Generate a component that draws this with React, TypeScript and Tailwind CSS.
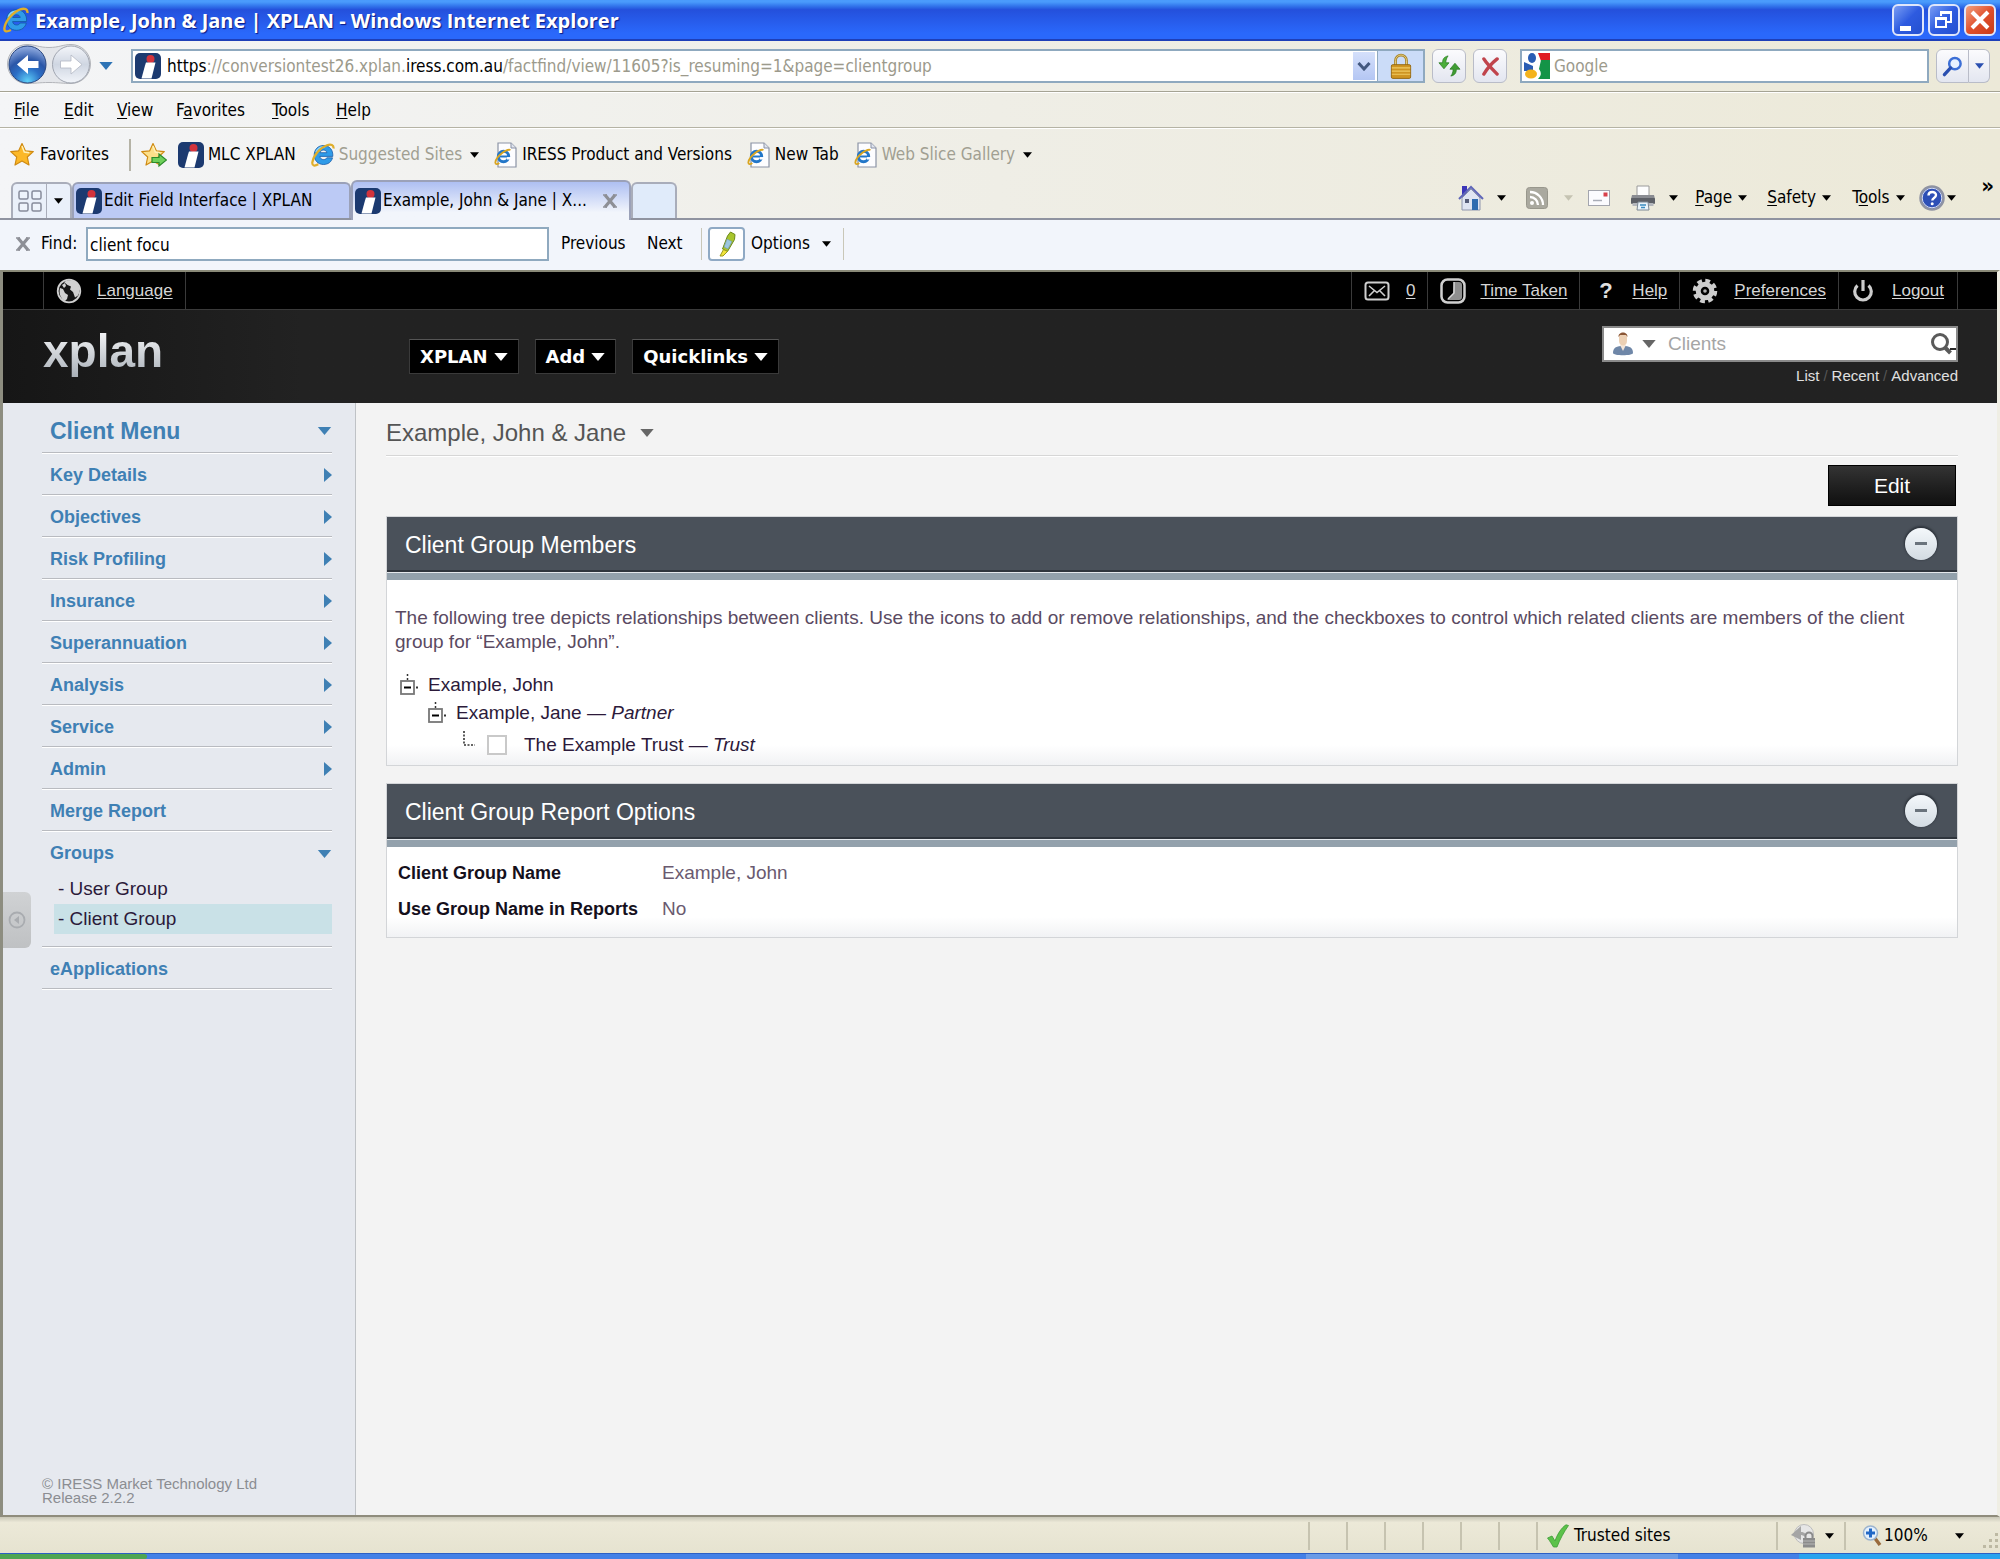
import React, { ReactNode, useState } from 'react'
import clsx from 'clsx'

const uiFont = "font-['DejaVu_Sans_Condensed','DejaVu_Sans',sans-serif]"
const pageFont = "font-['Liberation_Sans',Arial,sans-serif]"

/* ---------- icons ---------- */

const Caret = ({ className }: { className?: string }) => (
  <svg viewBox="0 0 10 6" className={clsx('shrink-0', className)} aria-hidden="true">
    <path d="M0 0h10L5 6z" fill="currentColor" />
  </svg>
)

const IeIcon = ({ className = 'w-6 h-6' }: { className?: string }) => (
  <svg viewBox="0 0 24 24" className={clsx('shrink-0', className)} aria-hidden="true">
    <path
      d="M12.500 2.500c-5.400 0-9.300 4-9.300 9.500s3.900 9.500 9.300 9.500c4.500 0 8-2.500 9-6.700h-5.700c-.6 1.200-1.700 1.800-3.200 1.800-2.100 0-3.500-1.200-3.700-3.200h12.900c.5-6.500-3.300-10.900-9.300-10.900zM9 9.700c.4-1.600 1.700-2.600 3.500-2.600s3.100 1 3.400 2.600z"
      fill="#2f9be8"
      stroke="#155ba8"
      strokeWidth=".8"
    />
    <path d="M5 9c1.500-4 5-5.500 9-5" fill="none" stroke="#8fd4fa" strokeWidth="1.500" />
    <path
      d="M22.500 5.500C23 2 20 .8 16 2.200 9.500 4.500 2.300 12.500 1.300 19.500c-.3 3.500 2.300 3.800 6 1.800"
      fill="none"
      stroke="#dfae2b"
      strokeWidth="2.200"
    />
  </svg>
)

const PageIcon = () => (
  <svg viewBox="0 0 24 26" className="w-6 h-[26px] shrink-0" aria-hidden="true">
    <path d="M4 1h13l5 5v19H4z" fill="#fdfdff" stroke="#8b93a5" strokeWidth="1.200" />
    <path d="M17 1v5h5" fill="#dfe4ee" stroke="#8b93a5" />
    <circle cx="9.500" cy="14.500" r="5.200" fill="none" stroke="#2276c8" strokeWidth="3" />
    <path d="M6 14.500h9" stroke="#2276c8" strokeWidth="2" />
    <path d="M13 16.300h5" stroke="#fdfdff" strokeWidth="2.500" />
    <path d="M16.500 8C13 6.500 2 14 1.300 20.500c0 2 2 2 4 .5" fill="none" stroke="#d9a520" strokeWidth="1.800" />
  </svg>
)

const IressIcon = () => (
  <svg viewBox="0 0 26 26" className="w-[26px] h-[26px] shrink-0" aria-hidden="true">
    <rect width="26" height="26" rx="5" fill="#1c3a70" />
    <circle cx="15.500" cy="6" r="4" fill="#d2333c" />
    <path d="M11 9.500h9.500l-4 16H6.500l3.500-13z" fill="#fff" />
  </svg>
)

const StarIcon = ({ arrow = false }: { arrow?: boolean }) => (
  <svg viewBox="0 0 26 26" className="w-[26px] h-[26px] shrink-0" aria-hidden="true">
    <path
      d="M12 1.500l3.300 7.300 8 .8-6 5.400 1.700 8-7-4-7 4 1.700-8-6-5.400 8-.8z"
      fill={arrow ? '#fde08a' : '#fcb827'}
      stroke="#cf8a12"
      strokeWidth="1.200"
      strokeLinejoin="round"
    />
    <path d="M12 4l2.300 6 5 .8" fill="none" stroke="#fff1b8" strokeWidth="1.500" />
    {arrow && (
      <path d="M11 15.500h7V12l7.500 6-7.500 6v-3.500h-7z" fill="#6fd05a" stroke="#2b8a2b" strokeWidth="1.200" />
    )}
  </svg>
)

const NavButtonsIcon = () => (
  <svg viewBox="0 0 84 42" className="w-[84px] h-[42px] shrink-0" aria-hidden="true">
    <defs>
      <radialGradient id="back" cx=".5" cy=".95" r=".9">
        <stop offset="0" stopColor="#5fd0f8" />
        <stop offset=".4" stopColor="#2b6fc6" />
        <stop offset=".65" stopColor="#2a56a8" />
        <stop offset="1" stopColor="#8aa6dc" />
      </radialGradient>
      <linearGradient id="fwd" x1="0" y1="0" x2="0" y2="1">
        <stop offset="0" stopColor="#f4f6fa" />
        <stop offset=".5" stopColor="#cfd6e2" />
        <stop offset="1" stopColor="#f2f5fa" />
      </linearGradient>
    </defs>
    <path
      d="M20 1.500c8 0 12 3 22 3s14-3 22-3a19.500 19.500 0 0 1 0 39c-8 0-12-1-22-1s-14 1-22 1a19.500 19.500 0 0 1 0-39z"
      fill="#e4e6ea"
      stroke="#b3b5ba"
    />
    <circle cx="20.500" cy="21.500" r="18.500" fill="url(#back)" stroke="#27457f" />
    <circle cx="64" cy="21.500" r="18.500" fill="url(#fwd)" stroke="#a0a5b0" />
    <path d="M10 21.500L21 12v6h10.500v7H21v6z" fill="#fff" />
    <path d="M75 21.500L64 12v6H53.500v7H64v6z" fill="#fff" stroke="#b2b8c4" strokeWidth=".8" />
  </svg>
)

const LockIcon = () => (
  <svg viewBox="0 0 24 28" className="w-[22px] h-[27px]" aria-hidden="true">
    <path d="M6 13V7.500a6 6 0 0 1 12 0V13" fill="none" stroke="#a8862c" strokeWidth="3" />
    <path d="M6 13V7.500a6 6 0 0 1 12 0V13" fill="none" stroke="#e6cf83" strokeWidth="1" />
    <rect x="1.500" y="12" width="21" height="15" rx="1.500" fill="#cf9522" stroke="#94670f" />
    <path d="M2 15.500h20M2 19h20M2 22.500h20" stroke="#f0ca62" strokeWidth="1.200" />
  </svg>
)

const RefreshIcon = () => (
  <svg viewBox="0 0 26 24" className="w-6 h-[22px]" aria-hidden="true">
    <path d="M12 1C7.500 2 6 4.500 6 8.500H2L7.500 15 13 8.500H9.500C9.500 5.500 10.500 3 12 1z" fill="#4cae3b" stroke="#277a1e" strokeWidth=".8" />
    <path d="M15 23c4.500-1 6-3.500 6-7.500h4L19.500 9 14 15.500h3.500c0 3-1 5.500-2.500 7.500z" fill="#3f9c33" stroke="#277a1e" strokeWidth=".8" />
  </svg>
)

const StopIcon = () => (
  <svg viewBox="0 0 20 20" className="w-[19px] h-[19px]" aria-hidden="true">
    <path d="M3 2c3 5 10 12 14 16M17 2C12 6 6 13 3 18" fill="none" stroke="#c0444c" strokeWidth="3.500" strokeLinecap="round" />
  </svg>
)

const GoogleIcon = () => (
  <svg viewBox="0 0 26 26" className="w-[26px] h-[26px] shrink-0" aria-hidden="true">
    <rect width="26" height="26" rx="2" fill="#fff" />
    <path d="M14 0h12v8H17z" fill="#e01b22" />
    <path d="M17 7h9v19H14c3-3 4-6 1-10z" fill="#149447" />
    <path d="M0 9l9 4v5H0z" fill="#2a5db4" />
    <ellipse cx="8" cy="5" rx="4" ry="5" fill="#2a5db4" />
    <ellipse cx="7" cy="21" rx="6" ry="4.500" fill="#f4b31c" />
  </svg>
)

const SearchIcon = () => (
  <svg viewBox="0 0 22 22" className="w-[21px] h-[21px]" aria-hidden="true">
    <circle cx="13.500" cy="8" r="6" fill="#e8f1ff" stroke="#3c6fd6" strokeWidth="2.600" />
    <path d="M9 12.500L2.500 19.500" stroke="#2a4fb0" strokeWidth="3.500" strokeLinecap="round" />
  </svg>
)

const QuickTabsIcon = () => (
  <svg viewBox="0 0 24 22" className="w-6 h-[22px]" fill="#eef3fb" stroke="#868b9b" strokeWidth="1.500" aria-hidden="true">
    <rect x="1" y="1" width="9" height="8" rx="1.500" />
    <rect x="14" y="1" width="9" height="8" rx="1.500" />
    <rect x="1" y="13" width="9" height="8" rx="1.500" />
    <rect x="14" y="13" width="9" height="8" rx="1.500" />
  </svg>
)

const CrossIcon = () => (
  <svg viewBox="0 0 14 14" className="w-[14px] h-[14px] shrink-0" aria-hidden="true">
    <path d="M2 1l10 12M12 1L2 13" stroke="#8d8f96" strokeWidth="3.200" />
    <path d="M0 1h4M10 1h4M0 13h4M10 13h4" stroke="#8d8f96" strokeWidth="1.500" />
  </svg>
)

const HomeIcon = () => (
  <svg viewBox="0 0 26 26" className="w-[26px] h-[26px]" aria-hidden="true">
    <path d="M4 1h5v7L4 12z" fill="#3b35b8" />
    <path d="M4 13l9-9 9 9v12H4z" fill="#dfe4f2" stroke="#8f96ad" />
    <path d="M1 14L13 2l12 12" fill="none" stroke="#5f66b8" strokeWidth="2" />
    <rect x="7" y="14" width="4" height="4" fill="#555c78" />
    <rect x="14" y="14" width="6" height="11" fill="#2f6bb0" />
  </svg>
)

const FeedIcon = () => (
  <svg viewBox="0 0 22 22" className="w-[22px] h-[22px]" aria-hidden="true">
    <rect x=".5" y=".5" width="21" height="21" rx="3" fill="#aaa99f" stroke="#98978c" />
    <circle cx="6" cy="16" r="2" fill="#fff" />
    <path d="M4 10a8 8 0 0 1 8 8M4 5a13 13 0 0 1 13 13" fill="none" stroke="#fff" strokeWidth="2.300" />
  </svg>
)

const ReadMailIcon = () => (
  <svg viewBox="0 0 22 16" className="w-[22px] h-4" aria-hidden="true">
    <rect x=".5" y=".5" width="21" height="15" fill="#fbfbff" stroke="#a3a5ae" />
    <rect x="15.500" y="2.500" width="4" height="4" fill="#d8404c" />
    <path d="M5 10.500h9" stroke="#a9adb8" strokeWidth="1.500" />
  </svg>
)

const PrinterIcon = () => (
  <svg viewBox="0 0 26 26" className="w-[26px] h-[26px]" aria-hidden="true">
    <path d="M7 1h12v10H7z" fill="#fdfdfd" stroke="#9a9a9a" />
    <path d="M2 10h22l1 4H1z" fill="#8a8c92" />
    <rect x="1" y="13" width="24" height="6" rx="1" fill="#5d6067" />
    <rect x="2.500" y="18" width="21" height="3" fill="#b4b7bd" />
    <path d="M8 17h10l1 8H7z" fill="#e9f3fb" stroke="#7c8894" />
    <path d="M10 20h6M11 22.500h4" stroke="#3b8cc0" strokeWidth="1.600" />
  </svg>
)

const HelpIcon = () => (
  <svg viewBox="0 0 26 26" className="w-[26px] h-[26px]" aria-hidden="true">
    <circle cx="13" cy="13" r="11.500" fill="#2d4fb6" stroke="#8f93a2" strokeWidth="2.500" />
    <circle cx="13" cy="13" r="9.800" fill="none" stroke="#d8def2" strokeWidth="1" />
    <path d="M9.500 10.500c0-4.500 7.500-4.500 7.500-.5 0 3-3.700 3-3.700 5.500" fill="none" stroke="#fff" strokeWidth="2.400" />
    <circle cx="13.200" cy="18.800" r="1.500" fill="#fff" />
  </svg>
)

const HighlightIcon = () => (
  <svg viewBox="0 0 22 26" className="w-[22px] h-[26px]" aria-hidden="true">
    <path d="M14.500 1l4.500 2.500-.5 5-7 12-5-2.500 5-13z" fill="#a8c52c" stroke="#6c8a18" />
    <path d="M11 8l5 2.500-4 7.500-4-2z" fill="#9cc6df" stroke="#7196a8" strokeWidth=".6" />
    <path d="M7.500 18.500l4 2-4.500 4.500H4z" fill="#f0e33a" stroke="#9c9a20" />
  </svg>
)

const GlobeIcon = () => (
  <svg viewBox="0 0 26 26" className="w-[26px] h-[26px]" aria-hidden="true">
    <circle cx="13" cy="13" r="11.300" fill="#151515" stroke="#d0d0d0" strokeWidth="1.800" />
    <path d="M8 4c4-2.500 9-2 12 .5 4 3 4.500 9 2 13l-3 2-2-5.500-3-2.500 1-3-3.500-1.500z" fill="#d0d0d0" />
    <path d="M4 10l3 1 2 4 3 2-1 4-2 2C5 21 2.500 16 4 10z" fill="#d0d0d0" />
    <path d="M6 7l3-2 1 3-2 2z" fill="#d0d0d0" />
  </svg>
)

const MailIcon = () => (
  <svg viewBox="0 0 26 20" className="w-[26px] h-5" fill="none" stroke="#cfcfcf" strokeWidth="2" aria-hidden="true">
    <rect x="1.500" y="1.500" width="23" height="17" rx="2.500" />
    <path d="M5 5l8 6.500L21 5M5 15l5-5M21 15l-5-5" strokeWidth="1.600" />
  </svg>
)

const ClockIcon = () => (
  <svg viewBox="0 0 26 26" className="w-[26px] h-[26px]" aria-hidden="true">
    <rect x="1.500" y="1.500" width="23" height="23" rx="6" fill="#000" stroke="#cfcfcf" strokeWidth="2.500" />
    <path d="M14 4h5q3 0 3 3v12q0 3-3 3H7l6-6z" fill="#8f8f8f" />
    <path d="M14 4v11l-6 6" fill="none" stroke="#d8d8d8" strokeWidth="1.500" />
  </svg>
)

const QuestionIcon = () => <span className="block w-3 text-center text-[22px] leading-6 font-bold text-[#e0e0e0]">?</span>

const GearIcon = () => (
  <svg viewBox="0 0 26 26" className="w-[26px] h-[26px]" aria-hidden="true">
    <circle cx="13" cy="13" r="10" fill="none" stroke="#cdcdcd" strokeWidth="4.500" strokeDasharray="4.600 3.254" />
    <circle cx="13" cy="13" r="6.800" fill="none" stroke="#cdcdcd" strokeWidth="5" />
    <circle cx="13" cy="13" r="1.800" fill="#b0b0b0" />
  </svg>
)

const PowerIcon = () => (
  <svg viewBox="0 0 22 24" className="w-[22px] h-6" fill="none" stroke="#cdcdcd" strokeWidth="3.200" aria-hidden="true">
    <path d="M5.500 6.500a8.300 8.300 0 1 0 11 0" />
    <path d="M11 1v11" />
  </svg>
)

const PersonIcon = () => (
  <svg viewBox="0 0 22 26" className="w-[22px] h-[26px]" aria-hidden="true">
    <path d="M1 22c0-6 4-7 10-7s10 1 10 7c0 3-20 3-20 0z" fill="#6f87a8" />
    <path d="M8 14h6l-3 6z" fill="#f3e4d6" />
    <path d="M7 5c0-4 8-4 8 0v5c0 6-8 6-8 0z" fill="#ecd0b4" />
    <path d="M6.500 6C6 0 16 0 15.500 6l-1.500-2H8z" fill="#8a5636" />
  </svg>
)

const ZoneLockIcon = () => (
  <svg viewBox="0 0 26 26" className="w-[26px] h-[26px]" aria-hidden="true">
    <circle cx="14" cy="11" r="9.500" fill="#e6e6e6" stroke="#bcbcbc" />
    <path d="M1 12l10-9v6c4 0 5 2 5 6-2-3-5-3-5-3v5z" fill="#a5a5a5" />
    <path d="M15.500 16v-3a3.500 3.500 0 0 1 7 0v3" fill="none" stroke="#8a8a8a" strokeWidth="2" />
    <rect x="13" y="15" width="12" height="9.500" fill="#8b8b8b" />
    <path d="M13 18h12M13 21h12" stroke="#b5b5b5" />
  </svg>
)

const ZoomIcon = () => (
  <svg viewBox="0 0 20 22" className="w-5 h-[22px]" aria-hidden="true">
    <path d="M12 12l6 8" stroke="#9a6a3c" strokeWidth="3.500" />
    <circle cx="8.500" cy="8" r="7" fill="#e4f0fc" stroke="#9cb4cf" strokeWidth="1.500" />
    <path d="M8.500 3.500v9M4 8h9" stroke="#2268c6" strokeWidth="3" />
  </svg>
)

const CheckIcon = () => (
  <svg viewBox="0 0 24 24" className="w-6 h-6" aria-hidden="true">
    <path d="M1.500 14l4.500-2 3 5C11 11 15 4 20 .8l2.500.7C18 8 14 15 11 23H7.500C5.500 20 4 17 1.500 14z" fill="#5cc24a" stroke="#3d9c36" strokeWidth=".8" />
  </svg>
)

/* ---------- browser chrome ---------- */

const Mnemonic = ({ text, at = 0 }: { text: string; at?: number }) => (
  <span>
    {text.slice(0, at)}
    <span className="underline underline-offset-2">{text[at]}</span>
    {text.slice(at + 1)}
  </span>
)

const TitleBar = () => {
  const button = 'w-8 h-8 rounded-md border-2 border-[#dfe6fb] flex items-center justify-center'
  return (
    <header className="h-[41px] shrink-0 flex items-center pl-[3px] pr-1 bg-linear-to-b from-[#4a9bfc] from-5% via-[#2450dc] via-25% to-[#2a68fb] to-85% border-b-2 border-[#1e3fb8]">
      <IeIcon className="w-[26px] h-[26px]" />
      <h1 className="ml-[6px] pt-[2px] flex-1 font-['Open_Sans',sans-serif] font-bold text-[20px] text-white whitespace-pre [text-shadow:1px_1px_1px_#0a1883]">
        {'Example, John & Jane | XPLAN - Windows Internet Explorer'}
      </h1>
      <div className="flex gap-1">
        <button aria-label="Minimize" className={clsx(button, 'bg-linear-to-br from-[#7b9cf3] via-[#2e5be0] to-[#2450d0]')}>
          <svg viewBox="0 0 32 32" className="w-8 h-8 shrink-0">
            <path d="M8 22h11v5H8z" fill="#fff" />
          </svg>
        </button>
        <button aria-label="Restore" className={clsx(button, 'bg-linear-to-br from-[#7b9cf3] via-[#2e5be0] to-[#2450d0]')}>
          <svg viewBox="0 0 32 32" className="w-8 h-8 shrink-0" fill="none" stroke="#fff" strokeWidth="2">
            <path d="M13 12V8h10v10h-4M13 9h10M8 14h10v9H8zM8 15h10" />
          </svg>
        </button>
        <button aria-label="Close" className={clsx(button, 'bg-linear-to-br from-[#f0a080] via-[#e0502c] to-[#c83a18]')}>
          <svg viewBox="0 0 32 32" className="w-8 h-8 shrink-0">
            <path d="M8 8l16 16M24 8L8 24" stroke="#fff" strokeWidth="4" />
          </svg>
        </button>
      </div>
    </header>
  )
}

const AddressBar = () => {
  const button =
    'h-[34px] flex items-center justify-center rounded-md border border-[#b9bcc8] bg-linear-to-b from-[#fbfbfd] to-[#e3e6f0]'
  return (
    <div className="h-[51px] shrink-0 flex items-center px-[7px] pr-[10px] border-b border-[#a5a394]">
      <button aria-label="Back and forward" className="pb-1">
        <NavButtonsIcon />
      </button>
      <button aria-label="Recent pages" className="ml-2 text-[#2d73b5]">
        <Caret className="w-[14px] h-2" />
      </button>
      <div className="ml-[18px] flex-1 h-[34px] flex items-center border-2 border-[#8fa9bf] bg-white pl-[2px]">
        <IressIcon />
        <div
          role="textbox"
          aria-label="Address"
          contentEditable
          suppressContentEditableWarning
          className="ml-[6px] pt-[2px] flex-1 whitespace-nowrap text-[#9c9a8c] outline-none"
        >
          <span className="text-black">https</span>://conversiontest26.xplan.<span className="text-black">iress.com.au</span>
          /factfind/view/11605?is_resuming=1&amp;page=clientgroup
        </div>
        <button aria-label="Show addresses" className="w-[22px] h-7 flex items-center justify-center bg-linear-to-b from-[#d5e0fb] to-[#b4c6f3]">
          <svg viewBox="0 0 14 9" className="w-[14px] h-[9px]">
            <path d="M1.500 1L7 7l5.500-6" fill="none" stroke="#43587f" strokeWidth="3" />
          </svg>
        </button>
        <button aria-label="Security report" className="ml-[2px] w-[46px] h-[30px] flex items-center justify-center border-l border-[#8fa9bf] bg-[#cbdcf8]">
          <LockIcon />
        </button>
      </div>
      <button aria-label="Refresh" className={clsx(button, 'ml-[7px] w-[34px]')}>
        <RefreshIcon />
      </button>
      <button aria-label="Stop" className={clsx(button, 'ml-[7px] w-[34px]')}>
        <StopIcon />
      </button>
      <label className="ml-[13px] w-[409px] h-[34px] flex items-center border-2 border-[#8fa9bf] bg-white pl-[2px]">
        <GoogleIcon />
        <input
          type="text"
          aria-label="Search the web"
          placeholder="Google"
          className="ml-1 pt-[2px] w-full placeholder:text-[#9c9a8c] outline-none"
        />
      </label>
      <button aria-label="Search" className={clsx(button, 'ml-[7px] w-[33px] rounded-r-none')}>
        <SearchIcon />
      </button>
      <button aria-label="Search options" className={clsx(button, 'w-[21px] rounded-l-none border-l-0 text-[#2a4fb0]')}>
        <Caret className="w-[9px] h-[6px]" />
      </button>
    </div>
  )
}

const menus = [
  { text: 'File', width: 'w-[50px]' },
  { text: 'Edit', width: 'w-[53px]' },
  { text: 'View', width: 'w-[59px]' },
  { text: 'Favorites', at: 1, width: 'w-24' },
  { text: 'Tools', width: 'w-16' },
  { text: 'Help', width: 'w-12' },
]

const MenuBar = () => (
  <nav className="h-9 shrink-0 flex items-center pl-[14px] pt-[2px] border-t border-b border-t-white border-b-[#b5b3a4]">
    {menus.map(({ text, at, width }) => (
      <button key={text} className={clsx('text-left', width)}>
        <Mnemonic text={text} at={at} />
      </button>
    ))}
  </nav>
)

const FavoriteLink = ({ icon, children, dim, menu }: { icon: ReactNode; children: string; dim?: boolean; menu?: boolean }) => (
  <a href="#" className={clsx('flex items-center gap-1 whitespace-nowrap', dim && 'text-[#a19f92]')}>
    {icon}
    {children}
    {menu && <Caret className="ml-1 w-[9px] h-[6px] text-black" />}
  </a>
)

const FavoritesBar = () => (
  <div className="h-[52px] shrink-0 flex items-center pl-[10px] border-t border-white">
    <button className="flex items-center gap-1">
      <StarIcon />
      Favorites
    </button>
    <div className="ml-5 h-8 w-[2px] bg-[#b5b3a6]" />
    <button aria-label="Add to favorites bar" className="ml-[10px] mr-[11px]">
      <StarIcon arrow />
    </button>
    <div className="flex items-center gap-[15px]">
      <FavoriteLink icon={<IressIcon />}>MLC XPLAN</FavoriteLink>
      <FavoriteLink icon={<IeIcon />} dim menu>
        Suggested Sites
      </FavoriteLink>
      <FavoriteLink icon={<PageIcon />}>IRESS Product and Versions</FavoriteLink>
      <FavoriteLink icon={<PageIcon />}>New Tab</FavoriteLink>
      <FavoriteLink icon={<PageIcon />} dim menu>
        Web Slice Gallery
      </FavoriteLink>
    </div>
  </div>
)

const TabBar = () => {
  const small = 'w-[9px] h-[6px]'
  return (
    <div className="h-10 shrink-0 flex items-end pl-[11px] border-b-2 border-[#8f93a0]">
      <div className="h-[36px] flex border-2 border-b-0 border-[#a9adba] rounded-t-md bg-[#eaf0fa]">
        <button aria-label="Quick tabs" className="w-[34px] flex items-center justify-center border-r border-[#a9adba]">
          <QuickTabsIcon />
        </button>
        <button aria-label="Tab list" className="w-[23px] flex items-center justify-center">
          <Caret className={small} />
        </button>
      </div>
      <button className="h-[36px] w-[279px] flex items-center gap-[2px] pl-[2px] border-2 border-b-0 border-[#9ba1b8] rounded-t-md bg-[#bccaf5] whitespace-nowrap">
        <IressIcon />
        Edit Field Interface | XPLAN
      </button>
      <div className="h-10 w-[280px] -mb-[2px] flex items-center gap-[2px] pl-[2px] pr-3 border-2 border-b-0 border-[#9ba1b8] rounded-t-md bg-linear-to-b from-[#aebff2] to-[#f2f5fb] to-80%">
        <IressIcon />
        <span className="flex-1 whitespace-nowrap">Example, John &amp; Jane | X...</span>
        <button aria-label="Close tab">
          <CrossIcon />
        </button>
      </div>
      <button aria-label="New tab" className="h-[36px] w-[46px] border-2 border-b-0 border-[#a9adba] rounded-t-md bg-[#e0ebfa]" />
      <div className="ml-auto h-[40px] flex items-center pr-[6px]">
        <button aria-label="Home" className="flex items-center gap-[13px]">
          <HomeIcon />
          <Caret className={small} />
        </button>
        <button aria-label="Feeds" className="ml-5 flex items-center gap-4 text-[#c5c3b2]">
          <FeedIcon />
          <Caret className={small} />
        </button>
        <button aria-label="Read mail" className="ml-[15px]">
          <ReadMailIcon />
        </button>
        <button aria-label="Print" className="ml-5 flex items-center gap-[13px]">
          <PrinterIcon />
          <Caret className={small} />
        </button>
        <button className="ml-[17px] w-[72px] flex items-center gap-[6px]">
          <Mnemonic text="Page" />
          <Caret className={small} />
        </button>
        <button className="w-[85px] flex items-center gap-[6px]">
          <Mnemonic text="Safety" />
          <Caret className={small} />
        </button>
        <button className="w-[67px] flex items-center gap-[6px]">
          <Mnemonic text="Tools" at={1} />
          <Caret className={small} />
        </button>
        <button aria-label="Help" className="flex items-center gap-[2px]">
          <HelpIcon />
          <Caret className={small} />
        </button>
        <button aria-label="More" className="ml-[25px] pb-6 text-[22px] leading-4 font-bold">
          »
        </button>
      </div>
    </div>
  )
}

const FindBar = () => (
  <div className="h-[50px] shrink-0 flex items-center pl-4 pb-[2px] bg-[#f2f5fb]">
    <button aria-label="Close find bar">
      <CrossIcon />
    </button>
    <label htmlFor="find" className="ml-[11px] w-[45px]">
      Find:
    </label>
    <input
      id="find"
      type="text"
      defaultValue="client focu"
      className="w-[463px] h-[34px] border-2 border-[#8fa9bf] bg-white pl-[2px] pt-[2px] outline-none"
    />
    <button className="ml-3 w-[86px] text-left">Previous</button>
    <button className="w-[54px] text-left">Next</button>
    <div className="h-8 w-px bg-[#c9c7b8]" />
    <button aria-label="Highlight matches" className="ml-[6px] w-[37px] h-[34px] flex items-center justify-center rounded border-2 border-[#8fa9c4] bg-white">
      <HighlightIcon />
    </button>
    <button className="ml-[6px] flex items-center gap-3">
      Options
      <Caret className="w-[9px] h-[6px]" />
    </button>
    <div className="ml-3 h-8 w-px bg-[#c9c7b8]" />
  </div>
)

const StatusBar = () => {
  const cell = 'h-7 border-l-2 border-[#c6c3b0] flex items-center'
  return (
    <footer className="h-9 pt-[2px] shrink-0 flex items-center justify-end bg-linear-to-b from-[#c9c7b8] via-[#ece9d8] via-15% to-[#e6e3d0]">
      {[0, 1, 2, 3, 4, 5].map((i) => (
        <div key={i} className={clsx(cell, 'w-[38px]')} />
      ))}
      <div className={clsx(cell, 'w-[240px] pl-2 gap-1')}>
        <CheckIcon />
        Trusted sites
      </div>
      <button aria-label="Protected mode" className={clsx(cell, 'w-[68px] pl-3 gap-[9px]')}>
        <ZoneLockIcon />
        <Caret className="w-[9px] h-[6px]" />
      </button>
      <button className={clsx(cell, 'w-[156px] pl-4 gap-[2px]')}>
        <ZoomIcon />
        <span className="flex-1 text-left">100%</span>
        <Caret className="mr-4 w-[9px] h-[6px]" />
        <svg viewBox="0 0 18 18" className="self-end w-[18px] h-[18px]" fill="#bdb9a3" aria-hidden="true">
          <path d="M13 1h3v3h-3zM13 7h3v3h-3zM13 13h3v3h-3zM7 7h3v3H7zM7 13h3v3H7zM1 13h3v3H1z" />
        </svg>
      </button>
    </footer>
  )
}

/* ---------- xplan page ---------- */

const UtilityLink = ({ icon, children, className = 'px-3 gap-4' }: { icon: ReactNode; children: string; className?: string }) => (
  <a href="#" className={clsx('flex items-center border-l border-[#3a3a3a]', className)}>
    {icon}
    <span className="underline underline-offset-2">{children}</span>
  </a>
)

const UtilityBar = () => (
  <nav className="h-[38px] flex pl-10 pr-[39px] bg-black text-[17px] text-[#d6d6d6] border-b border-[#3a3a3a]">
    <UtilityLink icon={<GlobeIcon />} className="px-3 gap-[15px] border-r">
      Language
    </UtilityLink>
    <div className="ml-auto flex border-r border-[#3a3a3a]">
      <UtilityLink icon={<MailIcon />} className="px-3 gap-4">
        0
      </UtilityLink>
      <UtilityLink icon={<ClockIcon />} className="px-3 gap-[14px]">
        Time Taken
      </UtilityLink>
      <UtilityLink icon={<QuestionIcon />} className="pl-[19px] pr-3 gap-[21px]">
        Help
      </UtilityLink>
      <UtilityLink icon={<GearIcon />} className="px-3 gap-4">
        Preferences
      </UtilityLink>
      <UtilityLink icon={<PowerIcon />} className="pl-[13px] pr-[13px] gap-[18px]">
        Logout
      </UtilityLink>
    </div>
  </nav>
)

const NavMenu = ({ children }: { children: string }) => (
  <button className="h-[35px] flex items-center gap-[6px] px-[10px] border border-t-[#555] border-[#3a3a3a] bg-black font-['DejaVu_Sans',sans-serif] font-bold text-[18px] text-white">
    {children}
    <Caret className="w-[14px] h-2" />
  </button>
)

const Header = () => (
  <div className="h-[93px] flex justify-between pl-10 pr-[39px] bg-linear-to-r from-[#161616] to-[#222] to-15%">
    <div className="flex">
      <div className="w-[366px] pt-[15px] text-[46px] leading-[52px] font-bold">
        <span className="bg-linear-to-b from-white to-[#a9b0b8] bg-clip-text text-transparent">xplan</span>
      </div>
      <div className="pt-[29px] flex gap-4">
        <NavMenu>XPLAN</NavMenu>
        <NavMenu>Add</NavMenu>
        <NavMenu>Quicklinks</NavMenu>
      </div>
    </div>
    <div className="w-[356px] pt-4">
      <div className="h-9 flex items-center bg-white border-2 border-[#8a8a8a] pl-2">
        <button aria-label="Search type" className="flex items-center gap-2 text-[#666]">
          <PersonIcon />
          <Caret className="w-[14px] h-2" />
        </button>
        <input
          type="text"
          aria-label="Search clients"
          placeholder="Clients"
          className="ml-3 flex-1 min-w-0 text-[19px] placeholder:text-[#a5a5a5] outline-none"
        />
        <button aria-label="Search clients">
          <svg viewBox="0 0 26 24" className="w-[26px] h-6" fill="none" aria-hidden="true">
            <circle cx="10" cy="10" r="7.500" stroke="#5a5a5a" strokeWidth="3" />
            <path d="M14.500 15l6 6" stroke="#5a5a5a" strokeWidth="4" />
            <path d="M20 17h6" stroke="#111" strokeWidth="1.800" />
          </svg>
        </button>
      </div>
      <div className="mt-1 flex justify-end gap-1 text-[15px] leading-5 text-[#e0e0e0]">
        <a href="#">List</a>
        <span className="text-[#555]">/</span>
        <a href="#">Recent</a>
        <span className="text-[#555]">/</span>
        <a href="#">Advanced</a>
      </div>
    </div>
  </div>
)

const sections = ['Key Details', 'Objectives', 'Risk Profiling', 'Insurance', 'Superannuation', 'Analysis', 'Service', 'Admin']

const ruleClass = 'border-b border-[#b9bbc0] shadow-[0_1px_0_#fff]'
const rowClass = 'w-full h-[42px] pt-[3px] flex items-center justify-between pl-2 text-left'

const Sidebar = () => (
  <aside className="relative w-[353px] shrink-0 flex flex-col pl-[39px] pr-[23px] bg-[#e6e9ef] border-r border-[#bfc2c6]">
    <nav className="font-bold text-[18px] text-[#3f80b4]">
      <button className={clsx('w-full h-[50px] pt-[7px] flex items-center justify-between pl-2 text-[23px]', ruleClass)}>
        Client Menu
        <Caret className="w-[15px] h-2" />
      </button>
      {sections.map((name) => (
        <a href="#" key={name} className={clsx(rowClass, ruleClass)}>
          {name}
          <svg viewBox="0 0 8 14" className="w-2 h-[14px]" aria-hidden="true">
            <path d="M0 0l8 7-8 7z" fill="currentColor" />
          </svg>
        </a>
      ))}
      <a href="#" className={clsx(rowClass, ruleClass)}>
        Merge Report
      </a>
      <div className={clsx('pb-3', ruleClass)}>
        <button className={rowClass}>
          Groups
          <Caret className="w-[15px] h-2" />
        </button>
        <ul className="pt-px pl-3 font-normal text-[19px] leading-[30px] text-[#2c1a3a]">
          <li className="pl-1">
            <a href="#">- User Group</a>
          </li>
          <li className="pl-1 bg-[#c9e1e7]">
            <a href="#">- Client Group</a>
          </li>
        </ul>
      </div>
      <a href="#" className={clsx(rowClass, ruleClass)}>
        eApplications
      </a>
    </nav>
    <button
      aria-label="Collapse menu"
      className="absolute left-0 top-[489px] w-7 h-[56px] flex items-center justify-center rounded-r-md bg-linear-to-b from-[#d0d2d4] to-[#bfc1c3]"
    >
      <svg viewBox="0 0 18 18" className="w-[18px] h-[18px]" aria-hidden="true">
        <circle cx="9" cy="9" r="7.500" fill="none" stroke="#a9acb0" strokeWidth="1.800" />
        <path d="M11 5v8L6 9z" fill="#a9acb0" />
      </svg>
    </button>
    <p className="mt-auto pb-[10px] text-[15px] leading-[14px] text-[#8b8d92]">
      © IRESS Market Technology Ltd
      <br />
      Release 2.2.2
    </p>
  </aside>
)

const Panel = ({ title, children }: { title: string; children: ReactNode }) => {
  const [isOpen, setIsOpen] = useState(true)

  return (
    <section className="border border-[#d3d5d8] bg-linear-to-t from-[#f1f2f4] to-white to-[20px]">
      <div className="h-[55px] flex items-center justify-between pl-[18px] pr-5 bg-[#4a515a] border-b-2 border-[#2f353d] text-white">
        <h2 className="pt-[3px] text-[23px]">{title}</h2>
        <button
          aria-label={isOpen ? 'Collapse' : 'Expand'}
          onClick={() => setIsOpen(!isOpen)}
          className="w-8 h-8 flex items-center justify-center rounded-full bg-linear-to-b from-[#f4f8fb] to-[#d3dbe2] shadow-[0_-1px_2px_1px_#2f353d]"
        >
          <span className="w-3 h-[3px] bg-[#6a737c]" />
        </button>
      </div>
      <div className="h-2 border-t border-[#e4e8ec] bg-[#93a1ac]" />
      {isOpen && children}
    </section>
  )
}

const Expander = () => (
  <svg viewBox="0 0 18 22" className="w-[18px] h-[22px] shrink-0" aria-hidden="true">
    <path d="M7.500 0v6" stroke="#333" strokeWidth="1.500" strokeDasharray="2 2" />
    <rect x="1" y="7" width="13" height="13" fill="#fff" stroke="#777" strokeWidth="1.800" />
    <path d="M4 13.500h7" stroke="#000" strokeWidth="2" />
    <path d="M16 13.500h2" stroke="#333" strokeWidth="1.800" />
  </svg>
)

const GroupTree = () => (
  <ul className="mt-[17px] pl-[5px] text-[19px] leading-7 text-[#2c1a3a]">
    <li className="flex items-center gap-[10px]">
      <Expander />
      Example, John
    </li>
    <li className="pl-7 flex items-center gap-[10px]">
      <Expander />
      <span>
        Example, Jane — <i>Partner</i>
      </span>
    </li>
    <li className="pl-[63px] h-[35px] flex items-center">
      <svg viewBox="0 0 12 16" className="w-3 h-4 mb-3" fill="none" stroke="#333" strokeWidth="1.600" aria-hidden="true">
        <path d="M1 0v14h11" strokeDasharray="2 1.500" />
      </svg>
      <input type="checkbox" id="trust" className="appearance-none ml-3 w-5 h-5 border-2 border-[#c9c9c9] bg-white" />
      <label htmlFor="trust" className="ml-[17px]">
        The Example Trust — <i>Trust</i>
      </label>
    </li>
  </ul>
)

const Main = () => (
  <main className="flex-1 min-w-0 pl-[30px] pr-[39px] bg-[#f3f3f3]">
    <div className="h-[53px] flex items-center border-b border-[#d6d6d6] shadow-[0_1px_0_#fff] pt-2">
      <button className="flex items-center gap-[14px] text-[24px] text-[#555]">
        Example, John &amp; Jane
        <Caret className="w-[14px] h-2 text-[#666]" />
      </button>
    </div>
    <div className="pt-[9px] pr-[2px] flex justify-end">
      <button className="w-32 h-[41px] bg-linear-to-b from-[#343434] to-[#101010] border border-black text-white text-[21px]">Edit</button>
    </div>
    <div className="mt-[10px] flex flex-col gap-[17px]">
      <Panel title="Client Group Members">
        <div className="px-2 pt-[26px] pb-[3px]">
          <p className="text-[19px] leading-6 text-[#5a4a62]">
            The following tree depicts relationships between clients. Use the icons to add or remove relationships, and the
            checkboxes to control which related clients are members of the client group for “Example, John”.
          </p>
          <GroupTree />
        </div>
      </Panel>
      <Panel title="Client Group Report Options">
        <table className="mx-[11px] mt-2 mb-[10px] text-[18px] leading-9 text-left">
          <tbody>
            <tr>
              <th className="w-[264px] font-bold text-[#15101c]">Client Group Name</th>
              <td className="text-[19px] text-[#6a5a70]">Example, John</td>
            </tr>
            <tr>
              <th className="font-bold text-[#15101c]">Use Group Name in Reports</th>
              <td className="text-[19px] text-[#6a5a70]">No</td>
            </tr>
          </tbody>
        </table>
      </Panel>
    </div>
  </main>
)

const App = () => (
  <div className={clsx('min-h-screen flex flex-col bg-[#ece9d8] text-[17px] text-black', uiFont)}>
    <TitleBar />
    <div className="flex flex-col bg-linear-to-r from-[#f4f5f7] via-[#efeee6] to-[#ece9d8]">
      <AddressBar />
      <MenuBar />
      <FavoritesBar />
      <TabBar />
    </div>
    <FindBar />
    <div className={clsx('flex-1 flex flex-col border-t-2 border-l-3 border-r-3 border-b-2 border-t-[#8a8a78] border-l-[#8d8d80] border-r-[#efeee4] border-b-[#8f8c7c]', pageFont)}>
      <UtilityBar />
      <Header />
      <div className="flex-1 flex">
        <Sidebar />
        <Main />
      </div>
    </div>
    <StatusBar />
    <div className="h-[6px] shrink-0 flex justify-end bg-[#4380e6] border-t border-[#2c5fc4]">
      <div className="mr-auto w-[147px] bg-[#4fa552] rounded-r" />
      <div className="w-[372px] bg-[#6a9be6]" />
      <div className="w-[121px]" />
      <div className="w-[201px] bg-[#29a3ee]" />
    </div>
  </div>
)

export default App
